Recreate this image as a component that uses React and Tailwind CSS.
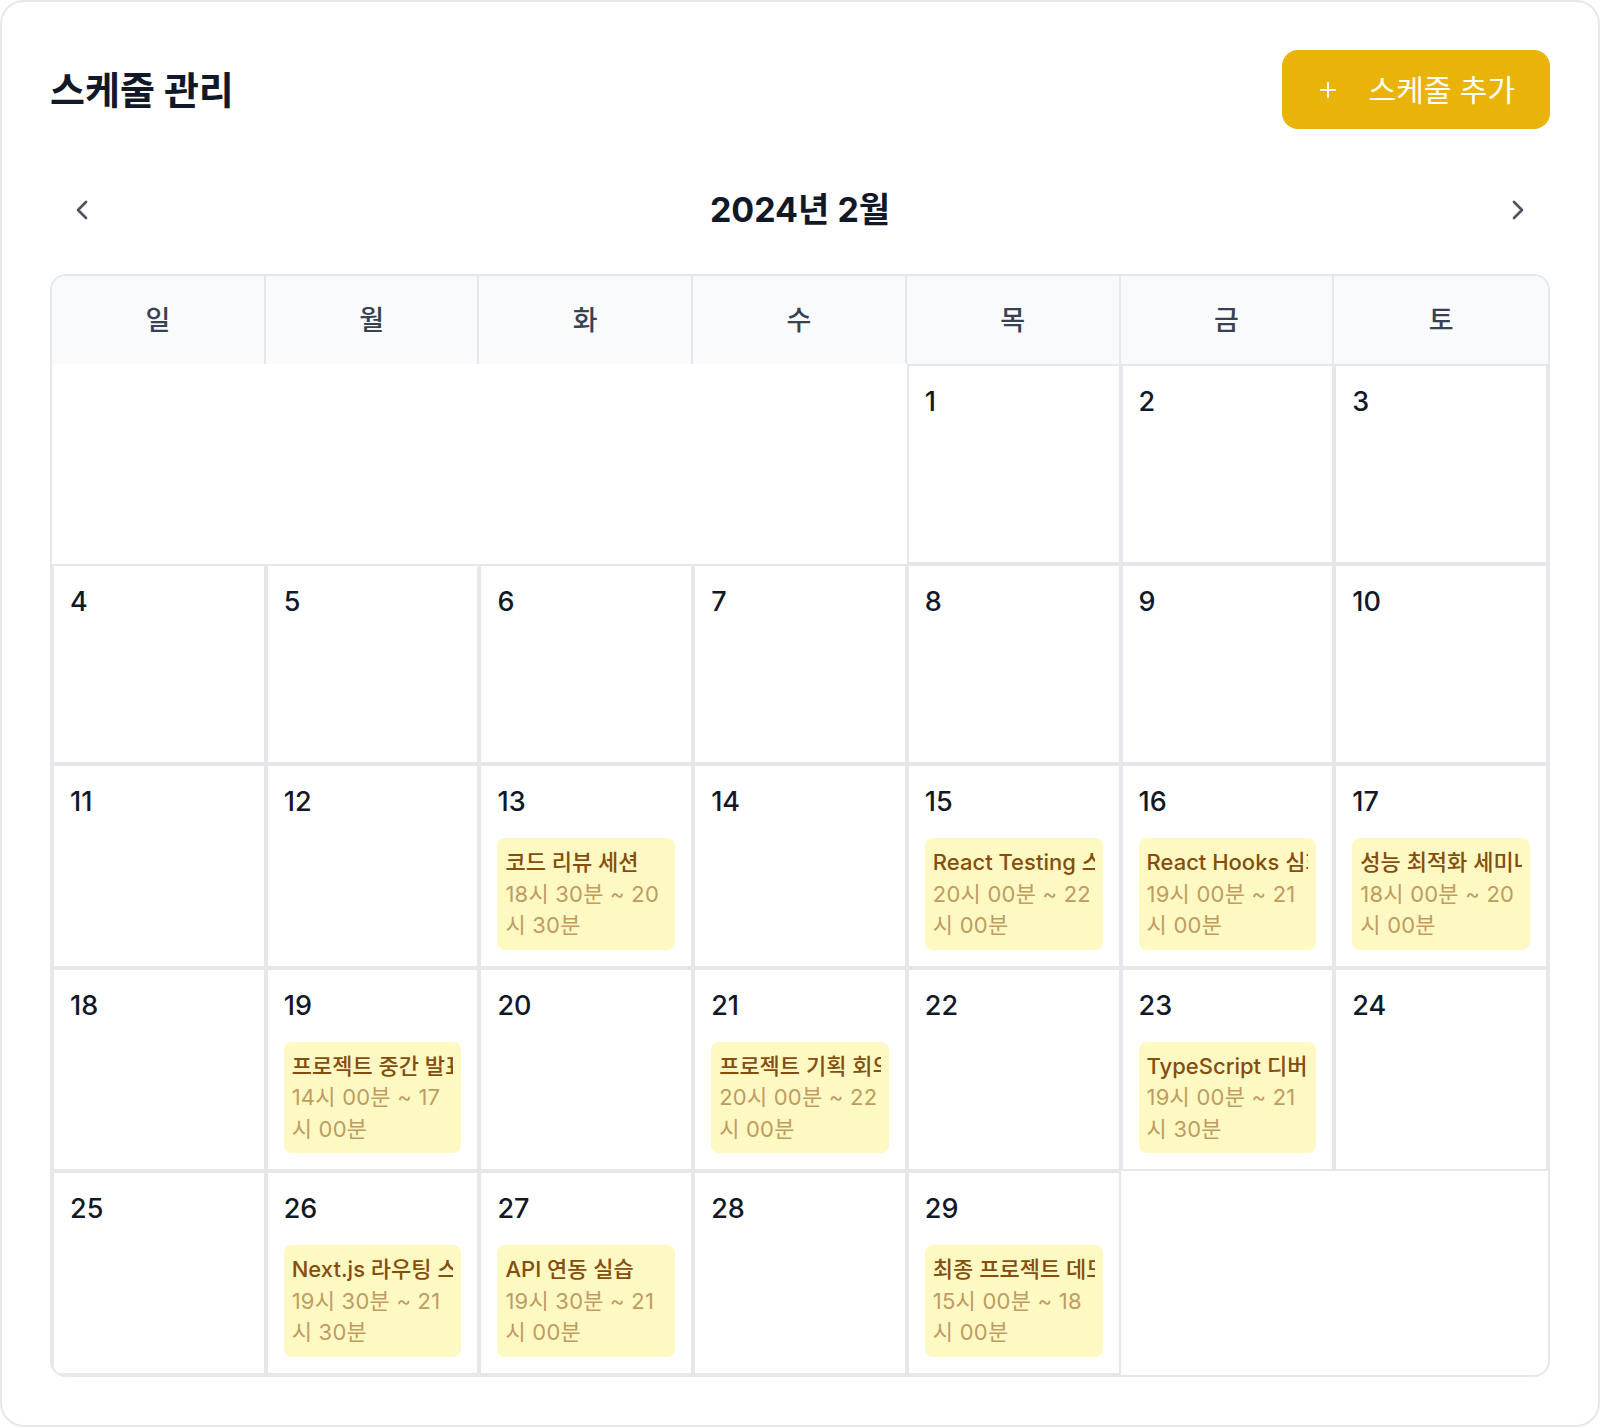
import React from "react";

const FONT = { fontFamily: 'Inter, "Noto Sans CJK KR", "Noto Sans", sans-serif' };

const events = {
  13: { title: "코드 리뷰 세션", time: "18시 30분 ~ 20시 30분" },
  15: { title: "React Testing 스터디", time: "20시 00분 ~ 22시 00분" },
  16: { title: "React Hooks 심화 학습", time: "19시 00분 ~ 21시 00분" },
  17: { title: "성능 최적화 세미나", time: "18시 00분 ~ 20시 00분" },
  19: { title: "프로젝트 중간 발표", time: "14시 00분 ~ 17시 00분" },
  21: { title: "프로젝트 기획 회의", time: "20시 00분 ~ 22시 00분" },
  23: { title: "TypeScript 디버깅", time: "19시 00분 ~ 21시 30분" },
  26: { title: "Next.js 라우팅 스터디", time: "19시 30분 ~ 21시 30분" },
  27: { title: "API 연동 실습", time: "19시 30분 ~ 21시 00분" },
  29: { title: "최종 프로젝트 데모", time: "15시 00분 ~ 18시 00분" },
};

const days = ["일", "월", "화", "수", "목", "금", "토"];

function ChevronLeft() {
  return (
    <svg width="32" height="32" viewBox="0 0 24 24" fill="none" stroke="currentColor" strokeWidth="2" strokeLinecap="round" strokeLinejoin="round">
      <path d="m15 18-6-6 6-6" />
    </svg>
  );
}
function ChevronRight() {
  return (
    <svg width="32" height="32" viewBox="0 0 24 24" fill="none" stroke="currentColor" strokeWidth="2" strokeLinecap="round" strokeLinejoin="round">
      <path d="m9 18 6-6-6-6" />
    </svg>
  );
}
function PlusIcon() {
  return (
    <svg width="24" height="24" viewBox="0 0 24 24" fill="none" stroke="currentColor" strokeWidth="2" strokeLinecap="round" strokeLinejoin="round">
      <path d="M5 12h14" />
      <path d="M12 5v14" />
    </svg>
  );
}

export default function App() {
  const cells = [];
  for (let i = 0; i < 4; i++) cells.push(null);
  for (let d = 1; d <= 29; d++) cells.push(d);

  return (
    <div style={FONT} className="w-full bg-white">
      <div className="border-2 border-gray-200 rounded-[24px] bg-white p-12">
        <div className="flex items-center justify-between">
          <h1 className="text-[38px] leading-[52px] font-bold text-[#111827]">스케줄 관리</h1>
          <button className="flex items-center h-[79px] pl-[34px] pr-[35px] gap-[29px] rounded-[16px] bg-[#eab308] text-white text-[30px] leading-[42px] font-normal">
            <PlusIcon />
            <span>스케줄 추가</span>
          </button>
        </div>

        <div className="mt-[49px] mb-[32px] h-16 flex items-center justify-between">
          <button className="p-4 text-[#4b5563]">
            <ChevronLeft />
          </button>
          <div className="text-[34px] leading-[44px] font-bold text-[#111827]">2024년 2월</div>
          <button className="p-4 text-[#4b5563]">
            <ChevronRight />
          </button>
        </div>

        <div className="border-2 border-gray-200 rounded-2xl overflow-hidden">
          <div className="grid grid-cols-7 bg-gray-50">
            {days.map((d, i) => (
              <div
                key={d}
                className={
                  "pt-[25px] pb-[23px] text-center text-[27px] leading-[40px] font-medium text-[#374151] " +
                  (i < 6 ? "border-r-2 border-gray-200" : "")
                }
              >
                {d}
              </div>
            ))}
          </div>
          <div className="grid grid-cols-7">
            {cells.map((d, i) =>
              d === null ? (
                <div key={"e" + i} />
              ) : (
                <div key={d} className="border-2 border-gray-200 min-h-[200px] p-4 flex flex-col min-w-0">
                  <div className="text-[27px] leading-[40px] font-medium text-[#111827]">{d}</div>
                  {events[d] && (
                    <div className="mt-4 rounded-lg bg-[#fef9c3] p-2 min-w-0">
                      <div className="whitespace-nowrap overflow-hidden text-[22px] leading-[32.5px] font-medium text-[#854d0e]">
                        {events[d].title}
                      </div>
                      <div className="text-[22px] leading-[31.5px] tracking-[0.01em] text-[#c19b5f]">{events[d].time}</div>
                    </div>
                  )}
                </div>
              )
            )}
          </div>
        </div>
      </div>
    </div>
  );
}
